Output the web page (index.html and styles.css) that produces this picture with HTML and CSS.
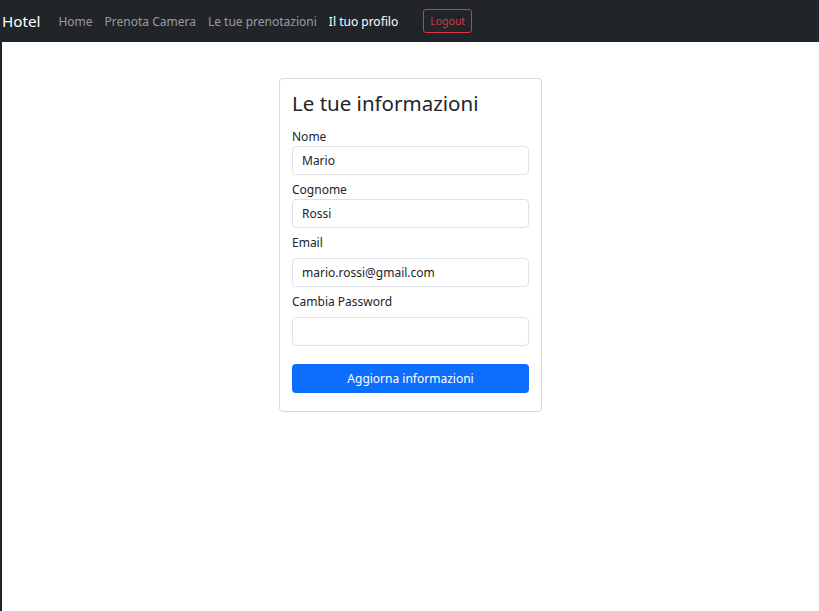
FILE: index.html
```html
<!DOCTYPE html>
<html lang="it">
<head>
<meta charset="utf-8">
<title>Hotel - Il tuo profilo</title>
<link rel="stylesheet" href="styles.css">
</head>
<body>
<div class="strip"></div>
<div class="page">
  <nav class="navbar">
    <span class="brand">Hotel</span>
    <a class="nav-link">Home</a>
    <a class="nav-link">Prenota Camera</a>
    <a class="nav-link">Le tue prenotazioni</a>
    <a class="nav-link active">Il tuo profilo</a>
    <button class="btn-logout">Logout</button>
  </nav>
  <main class="main">
    <div class="card">
      <h4 class="card-title">Le tue informazioni</h4>
      <div class="field">
        <label class="label">Nome</label>
        <div class="input">Mario</div>
      </div>
      <div class="field">
        <label class="label">Cognome</label>
        <div class="input">Rossi</div>
      </div>
      <div class="field">
        <label class="label lab-gap">Email</label>
        <div class="input">mario.rossi@gmail.com</div>
      </div>
      <div class="field">
        <label class="label lab-gap">Cambia Password</label>
        <div class="input"></div>
      </div>
      <button class="btn-primary">Aggiorna informazioni</button>
    </div>
  </main>
</div>
</body>
</html>
```
FILE: styles.css
```css
html, body {
  margin: 0;
  padding: 0;
  height: 100%;
}
body {
  display: flex;
  font-family: "Noto Sans", "Open Sans", sans-serif;
  font-size: 12px;
  color: #212529;
  background: #fff;
}
.strip {
  width: 2px;
  background: #212529;
  flex-shrink: 0;
}
.page {
  flex: 1;
}
.navbar {
  display: flex;
  align-items: center;
  height: 42px;
  background: #212529;
  margin-left: -2px;
  padding-left: 2px;
}
.brand {
  font-size: 15.2px;
  color: #fff;
  margin-right: 12px;
}
.nav-link {
  color: rgba(255,255,255,0.55);
  padding: 0 6px;
  font-size: 12px;
}
.nav-link.active {
  color: #fff;
}
.btn-logout {
  margin-left: 19px;
  font-family: inherit;
  font-size: 10.5px;
  color: #dc3545;
  background: transparent;
  border: 1px solid #dc3545;
  border-radius: 3px;
  height: 24px;
  padding: 0 6px;
}
.main {
  display: flex;
  justify-content: center;
  padding-top: 36px;
}
.card {
  width: 237px;
  border: 1px solid #d6d8db;
  border-radius: 4px;
  padding: 12px 12px 18px 12px;
}
.card-title {
  margin: 0 0 11px 0;
  font-size: 20.5px;
  font-weight: 400;
  line-height: 1.2;
}
.field {
  margin-bottom: 5px;
}
.label {
  display: block;
  line-height: 19.2px;
  margin-bottom: 0;
}
.lab-gap {
  margin-bottom: 6px;
}
.input {
  box-sizing: border-box;
  height: 29px;
  border: 1px solid #dee2e6;
  border-radius: 4px;
  padding: 0 9px;
  line-height: 27px;
}
.btn-primary {
  display: block;
  width: 100%;
  margin-top: 18px;
  height: 29px;
  border: none;
  border-radius: 4px;
  background: #0d6efd;
  color: #fff;
  font-family: inherit;
  font-size: 12px;
}
```
